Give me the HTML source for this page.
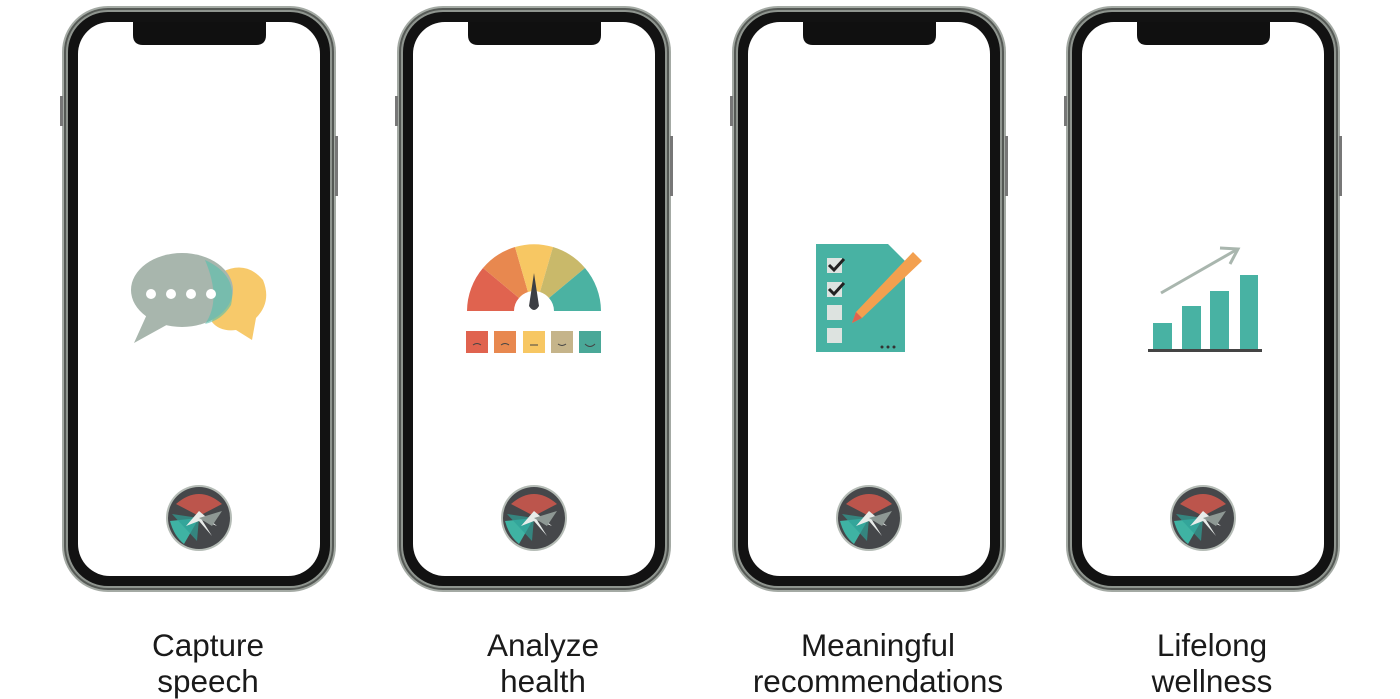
<!DOCTYPE html>
<html><head><meta charset="utf-8"><style>
html,body{margin:0;padding:0;background:#fff;width:1400px;height:699px;overflow:hidden}
.l{position:absolute;width:320px;text-align:center;font-family:"Liberation Sans",sans-serif;font-size:31.5px;line-height:36px;color:#1a1a1a;top:627px}
</style></head><body>
<svg width="1400" height="699" style="position:absolute;left:0;top:0">
<defs>
<g id="ph">
<rect x="0" y="0" width="274" height="586" rx="46" fill="#a4aaa4"/>
<rect x="2" y="2" width="270" height="582" rx="44" fill="#555955"/>
<rect x="4" y="4" width="266" height="578" rx="42" fill="#8f958f"/>
<rect x="6" y="6" width="262" height="574" rx="40" fill="#121212"/>
<rect x="16" y="16" width="242" height="554" rx="32" fill="#fff"/>
<path d="M71 16 H204 V29 Q204 39 194 39 H81 Q71 39 71 29 Z" fill="#101010"/>
<rect x="-2" y="90" width="3" height="30" fill="#777"/>
<rect x="273" y="130" width="3" height="60" fill="#777"/>
<circle cx="137" cy="512" r="33" fill="#b5bcb6"/>
<circle cx="137" cy="512" r="31" fill="#45474a"/>
<path d="M114 498 Q137 478 160 498 L137 510Z" fill="#d9594c" opacity=".8"/>
<path d="M108 515 Q112 530 122 538 L137 512Z" fill="#3fb3a3"/>
<path d="M110 508 L137 512 L135 535 Z" fill="#2f9f95" opacity=".7"/>
<path d="M124 520 L137 505 L155 520 L140 514 L150 530 L137 515Z" fill="#e8ecea"/>
<path d="M137 512 L160 505 L150 520Z" fill="#8e9894"/>
</g>
</defs>
<use href="#ph" x="62" y="6"/>
<use href="#ph" x="397" y="6"/>
<use href="#ph" x="732" y="6"/>
<use href="#ph" x="1066" y="6"/>

<!-- chat -->
<path d="M222 272 Q246 260 263 280 Q272 302 256 318 L252 340 L236 330 Q220 332 212 322Z" fill="#f7c96a"/>
<ellipse cx="182" cy="290" rx="51" ry="37" fill="#a8b6ad"/>
<path d="M205 260 Q238 275 231 305 Q222 320 205 324 Q222 300 205 260Z" fill="#57bfae" opacity=".6"/>
<path d="M148 312 L134 343 L172 322Z" fill="#a8b6ad"/>
<g fill="#fff"><circle cx="151" cy="294" r="5"/><circle cx="171" cy="294" r="5"/><circle cx="191" cy="294" r="5"/><circle cx="211" cy="294" r="5"/></g>

<!-- gauge -->
<g transform="translate(534,311)">
<path d="M-67 0 A67 67 0 0 1 -51 -43 L-15 -13 A20 20 0 0 0 -20 0Z" fill="#e0634f"/>
<path d="M-51 -43 A67 67 0 0 1 -19 -64 L-6 -19 A20 20 0 0 0 -15 -13Z" fill="#e8884f"/>
<path d="M-19 -64 A67 67 0 0 1 19 -64 L6 -19 A20 20 0 0 0 -6 -19Z" fill="#f7c763"/>
<path d="M19 -64 A67 67 0 0 1 51 -43 L15 -13 A20 20 0 0 0 6 -19Z" fill="#c9b96a"/>
<path d="M51 -43 A67 67 0 0 1 67 0 L20 0 A20 20 0 0 0 15 -13Z" fill="#4bb2a2"/>
<path d="M0 -38 L-5 -5 Q0 3 5 -5Z" fill="#3d3f44"/>
</g>
<g>
<rect x="466" y="331" width="22" height="22" fill="#e0634f"/>
<rect x="494" y="331" width="22" height="22" fill="#e8884f"/>
<rect x="523" y="331" width="22" height="22" fill="#f7c763"/>
<rect x="551" y="331" width="22" height="22" fill="#c5b48a"/>
<rect x="579" y="331" width="22" height="22" fill="#4aa898"/>
<g stroke="#444" stroke-width="1" fill="none"><path d="M473 345 q4 -3 8 0"/><path d="M501 345 q4 -3 8 0"/><path d="M530 345 h8"/><path d="M558 344 q4 3 8 0"/><path d="M585 344 q5 5 10 0"/></g>
</g>

<!-- checklist -->
<path d="M816 244 H888 L905 261 V352 H816Z" fill="#48b2a3"/>
<g fill="#dde3e0"><rect x="827" y="258" width="15" height="15"/><rect x="827" y="282" width="15" height="15"/><rect x="827" y="305" width="15" height="15"/><rect x="827" y="328" width="15" height="15"/></g>
<g stroke="#222" stroke-width="3" fill="none"><path d="M829 265 l5 5 l10 -11"/><path d="M829 289 l5 5 l10 -11"/></g>
<path d="M913 252 L922 261 L862 318 L852 323 L856 312Z" fill="#f3a04f"/>
<path d="M852 323 L856 312 L862 318Z" fill="#e0634f"/>
<g fill="#333"><circle cx="882" cy="347" r="1.5"/><circle cx="888" cy="347" r="1.5"/><circle cx="894" cy="347" r="1.5"/></g>

<!-- chart -->
<g fill="#48b2a3"><rect x="1153" y="323" width="19" height="27"/><rect x="1182" y="306" width="19" height="44"/><rect x="1210" y="291" width="19" height="59"/><rect x="1240" y="275" width="18" height="75"/></g>
<rect x="1148" y="349" width="114" height="3" fill="#444"/>
<g stroke="#a9b6ae" stroke-width="3" fill="none"><path d="M1161 293 L1236 250"/><path d="M1220 248 L1238 249 L1230 264"/></g>
</svg>
<div class="l" style="left:48px">Capture<br>speech</div>
<div class="l" style="left:383px">Analyze<br>health</div>
<div class="l" style="left:718px">Meaningful<br>recommendations</div>
<div class="l" style="left:1052px">Lifelong<br>wellness</div>
</body></html>
